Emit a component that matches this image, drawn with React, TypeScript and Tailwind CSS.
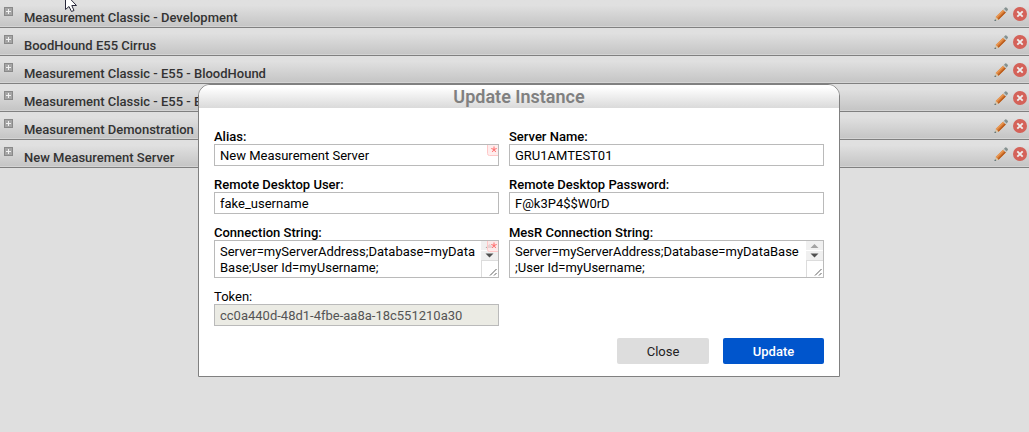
import type { ReactNode } from "react";

const instances = [
  "Measurement Classic - Development",
  "BoodHound E55 Cirrus",
  "Measurement Classic - E55 - BloodHound",
  "Measurement Classic - E55 - BloodHound",
  "Measurement Demonstration",
  "New Measurement Server",
];

const inputClass = "block h-[22px] w-full border border-[#bababa] bg-white px-[5px] text-[13px] leading-4 text-black outline-none disabled:bg-[#ebebe4] disabled:text-[#545454]";

export default function App() {
  return (
    <div className="relative min-h-screen overflow-hidden bg-[#dfdfdf] font-['Roboto',sans-serif] text-[13px] leading-4 text-black">
      <ul>
        {instances.map((name, i) => (
          <InstanceRow key={i} name={name} />
        ))}
      </ul>

      <Pointer />

      <div className="absolute inset-0 flex items-start justify-center pt-[84px] pl-[9px]">
        <UpdateDialog />
      </div>
    </div>
  );
}

function InstanceRow({ name }: { name: string }) {
  return (
    <li className="flex h-7 items-start border-b border-[#808080] bg-linear-to-b from-[#e0e0e0] from-20% to-[#c4c4c4] pr-[2px] pl-1 shadow-[inset_0_-1px_0_#d4d4d4]">
      <button type="button" aria-label={`Expand ${name}`} className="mt-[7px]">
        <ExpandIcon />
      </button>
      <span className="mt-[10px] ml-[11px] flex-1 font-medium text-[#333]">{name}</span>
      <button type="button" aria-label={`Edit ${name}`} className="mt-[6px]">
        <PencilIcon />
      </button>
      <button type="button" aria-label={`Delete ${name}`} className="mt-[7px] ml-1">
        <DeleteIcon />
      </button>
    </li>
  );
}

function UpdateDialog() {
  return (
    <form
      role="dialog"
      aria-labelledby="dialog-title"
      onSubmit={(e) => e.preventDefault()}
      className="w-full max-w-[642px] overflow-hidden rounded-t-xl border border-[#808080] bg-white"
    >
      <h1 id="dialog-title" className="bg-linear-to-b from-white from-10% to-[#dadada] text-center text-lg leading-[23px] font-semibold text-[#808080]">
        Update Instance
      </h1>

      <div className="grid grid-cols-[285fr_315fr] gap-[10px] px-[15px] pt-5">
        <Field id="alias" label="Alias:">
          <input id="alias" type="text" defaultValue="New Measurement Server" className={inputClass} />
          <RequiredMark />
        </Field>
        <Field id="server" label="Server Name:">
          <input id="server" type="text" defaultValue="GRU1AMTEST01" className={inputClass} />
        </Field>
        <Field id="user" label="Remote Desktop User:">
          <input id="user" type="text" defaultValue="fake_username" className={inputClass} />
        </Field>
        <Field id="password" label="Remote Desktop Password:">
          <input id="password" type="text" defaultValue="F@k3P4$$W0rD" className={inputClass} />
        </Field>
        <Field id="connection" label="Connection String:">
          <ConnectionBox id="connection" />
          <RequiredMark />
        </Field>
        <Field id="mesr" label="MesR Connection String:">
          <ConnectionBox id="mesr" />
        </Field>
        <Field id="token" label="Token:" optional>
          <input id="token" type="text" disabled defaultValue="cc0a440d-48d1-4fbe-aa8a-18c551210a30" className={inputClass} />
        </Field>
      </div>

      <div className="flex justify-end gap-[14px] px-[15px] py-3">
        <button type="button" className="h-[26px] w-[92px] rounded-xs bg-[#ddd] pt-[2px] text-[#222]">
          Close
        </button>
        <button type="submit" className="h-[26px] w-[101px] rounded-xs bg-[#0055cc] pt-[2px] font-medium text-white">
          Update
        </button>
      </div>
    </form>
  );
}

function Field({ id, label, optional = false, children }: { id: string; label: string; optional?: boolean; children: ReactNode }) {
  return (
    <div>
      <label htmlFor={id} className={optional ? "block h-4 leading-[18px]" : "block h-4 leading-[18px] font-medium"}>
        {label}
      </label>
      <div className="relative">{children}</div>
    </div>
  );
}

function ConnectionBox({ id }: { id: string }) {
  return (
    <>
      <textarea
        id={id}
        spellCheck={false}
        defaultValue="Server=myServerAddress;Database=myDataBase;User Id=myUsername;"
        className="block h-[38px] w-full resize-none overflow-hidden border border-[#bababa] bg-white pt-[3px] pr-[22px] pl-[5px] text-[13px] leading-4 text-black outline-none"
      />
      <ScrollTrack />
    </>
  );
}

function ScrollTrack() {
  return (
    <svg className="absolute top-px right-px" width="17" height="36" viewBox="0 0 17 36" aria-hidden="true">
      <path d="M0 0h17v9H0zM0 10h17v9H0z" fill="#f0f0f0" />
      <path d="M0 19h17v1H1v16H0z" fill="#dcdcdc" />
      <path d="M8.500 3 12.500 7h-8z" fill="#a3a3a3" />
      <path d="M8.500 16.500 4.500 12.500h8z" fill="#505050" />
      <path d="m9 34.500 6.500-6.500M13 34.500l2.500-2.500" stroke="#606060" />
    </svg>
  );
}

function RequiredMark() {
  return (
    <svg className="absolute top-px right-px" width="11" height="11" viewBox="0 0 11 11" aria-hidden="true">
      <path d="M.5 0v8.500q0 2 2 2H11V0z" fill="#ffe6e6" fillOpacity=".7" />
      <path d="M.5 0v8.500q0 2 2 2H11" fill="none" stroke="#ffc8c8" />
      <path d="M7 1.500v3M4.300 3.500 7 4.500l2.700-1M5.300 7 7 4.500 8.700 7" stroke="#ff6a6a" fill="none" />
    </svg>
  );
}

function ExpandIcon() {
  return (
    <svg className="block" width="9" height="9" viewBox="0 0 9 9" shapeRendering="crispEdges" aria-hidden="true">
      <path d="M0 0h9v9H0z" fill="#898989" />
      <path d="M1 1h7v7H1z" fill="#a5a5a5" />
      <path d="M4 2h1v2h2v1H5v2H4V5H2V4h2z" fill="#f0f0f0" />
    </svg>
  );
}

function PencilIcon() {
  return (
    <svg className="block" width="16" height="16" viewBox="0 0 16 16" aria-hidden="true">
      <path d="m2.700 11 7.600-7.600 2.800 2.800L5.500 13.800z" fill="#d77a34" />
      <path d="m2.700 11 7.600-7.600 1 1L3.700 12z" fill="#e99a56" />
      <path d="m4.600 12.900 7.600-7.600.9.900-7.600 7.600z" fill="#b75b1c" />
      <path d="m10 3.700 1.200-1.200 2.800 2.800-1.200 1.200z" fill="#c4c9c9" />
      <path d="M11 2.700 12.200 1.500q.8-.5 1.500.2l1 1q.6.700.1 1.400L13.700 5.400z" fill="#849190" />
      <path d="M2.700 11 1.500 15l4-1.200z" fill="#d8c5a7" />
      <path d="m2 13.200-.6 1.900 2-.6z" fill="#395967" />
    </svg>
  );
}

function DeleteIcon() {
  return (
    <svg className="block" width="14" height="14" viewBox="0 0 14 14" aria-hidden="true">
      <circle cx="7" cy="7" r="7" fill="#d46259" />
      <path d="m4.300 4.300 5.400 5.400m0-5.400-5.400 5.400" stroke="#eee" strokeWidth="1.900" />
    </svg>
  );
}

function Pointer() {
  return (
    <svg className="absolute top-0 left-[65px]" width="12" height="12" viewBox="0 0 12 12" aria-hidden="true">
      <path d="M.5-6v15.500L4 6.500 6.500 11.500 9 10.500 6.800 5.500h4.700z" fill="#fff" stroke="#28283a" />
    </svg>
  );
}
